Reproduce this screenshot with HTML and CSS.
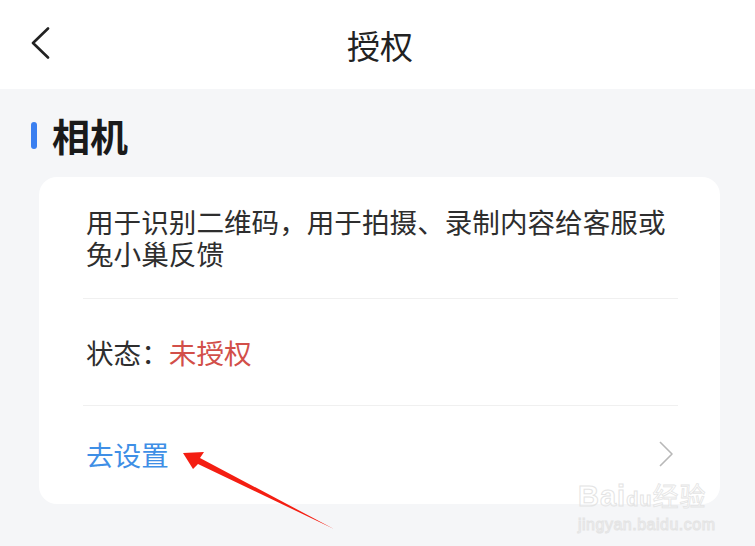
FILE: index.html
```html
<!DOCTYPE html>
<html lang="zh-CN">
<head>
    <meta charset="UTF-8">
    <meta name="viewport" content="width=device-width, initial-scale=1.0">
    <title>授权</title>
    <link rel="stylesheet" href="styles.css">
</head>
<body>
    <header class="top-bar">
        <div class="back">
            <svg width="20" height="34" viewBox="0 0 20 34">
                <polyline points="17,1.5 2,16 17,30.5" fill="none" stroke="#222" stroke-width="2.6" stroke-linecap="round" stroke-linejoin="round"/>
            </svg>
        </div>
        <h1 class="title">授权</h1>
        <div></div>
    </header>

    <main class="page">
        <div class="section-head">
            <span class="bar"></span>
            <h2>相机</h2>
        </div>

        <section class="card">
            <div class="row row-desc">
                <p>用于识别二维码，用于拍摄、录制内容给客服或兔小巢反馈</p>
            </div>
            <div class="row row-status">
                <span class="label">状态：</span><span class="state">未授权</span>
            </div>
            <div class="row row-link">
                <span class="link">去设置</span>
                <svg class="chevron" width="16" height="26" viewBox="0 0 16 26">
                    <polyline points="2,1 14,13 2,25" fill="none" stroke="#b8b8b8" stroke-width="1.6" stroke-linejoin="round"/>
                </svg>
            </div>
        </section>
    </main>

    <div class="watermark">
        <div class="wm-logo">Bai<span class="wm-du">du</span><span class="wm-cn">经验</span></div>
        <div class="wm-url">jingyan.baidu.com</div>
    </div>

    <!-- annotation arrow drawn over the page -->
    <svg class="arrow" width="755" height="546" viewBox="0 0 755 546">
        <polygon points="183,453 204,452 200,458 334,529 198,464 193,469" fill="#f41e12"/>
    </svg>
</body>
</html>
```

FILE: styles.css
```css
* {
    box-sizing: border-box;
}

html, body {
    margin: 0;
    height: 100%;
}

body {
    background-color: #f5f6f8;
    font-family: "Noto Sans CJK SC", "Noto Sans", sans-serif;
    color: #2e2e2e;
    position: relative;
    overflow: hidden;
}

.top-bar {
    height: 89px;
    background-color: #fff;
    display: grid;
    grid-template-columns: 1fr auto 1fr;
    align-items: center;
    padding: 0 31px;
}

.back {
    display: flex;
    align-items: center;
    height: 34px;
    margin-top: -2px;
}

.title {
    margin: 0 0 0 5px;
    font-size: 33px;
    font-weight: 400;
    color: #222;
    line-height: 40px;
}

.section-head {
    display: flex;
    align-items: center;
    height: 46px;
    margin: 23px 0 19px;
    padding-left: 31px;
}

.bar {
    width: 6px;
    height: 27px;
    border-radius: 3px;
    background-color: #3a7ff0;
    margin-right: 15px;
}

.section-head h2 {
    margin: 0;
    font-size: 38px;
    font-weight: 700;
    line-height: 46px;
    color: #1a1a1a;
}

.card {
    background-color: #fff;
    border-radius: 18px;
    margin: 0 35px 0 39px;
    padding: 0 42px 0 44px;
}

.row {
    border-bottom: 1px solid #f0f0f0;
    font-size: 27.6px;
    padding-left: 3px;
}

.row:last-child {
    border-bottom: none;
}

.row-desc {
    padding-top: 28px;
    padding-bottom: 29px;
}

.row-desc p {
    margin: 0;
    line-height: 32px;
}

.row-status {
    height: 107px;
    display: flex;
    align-items: center;
}

.state {
    color: #d24f49;
}

.row-link {
    height: 98px;
    display: flex;
    align-items: center;
    justify-content: space-between;
    padding-bottom: 2px;
}

.link {
    color: #3f8fe6;
}

.chevron {
    margin-right: 4px;
}

.watermark {
    position: absolute;
    left: 578px;
    top: 478px;
    color: transparent;
    -webkit-text-stroke: 1px #e4e4e4;
    font-family: "Liberation Sans", sans-serif;
}

.wm-logo {
    font-size: 29px;
    font-weight: 700;
    line-height: 34px;
    letter-spacing: 1px;
}

.wm-du {
    font-size: 20px;
}

.wm-cn {
    font-family: "Noto Sans CJK SC", sans-serif;
    font-size: 26px;
    font-weight: 400;
    -webkit-text-stroke: 0.8px #e4e4e4;
}

.wm-url {
    font-size: 16px;
    line-height: 18px;
    letter-spacing: 0.5px;
}

.arrow {
    position: absolute;
    left: 0;
    top: 0;
}
```
